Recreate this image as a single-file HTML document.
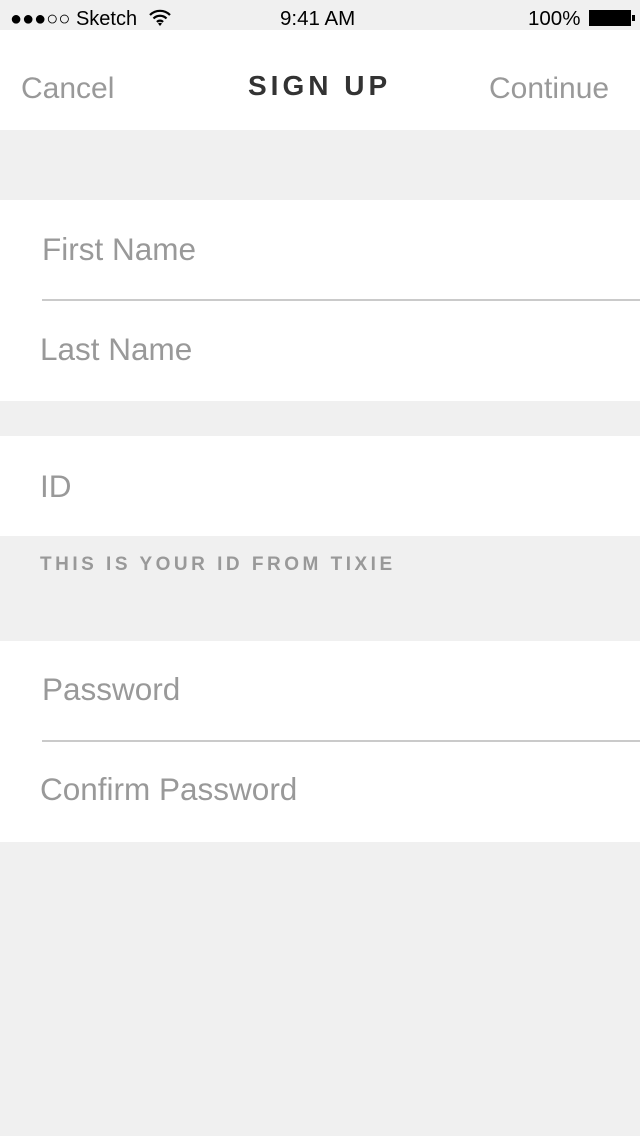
<!DOCTYPE html>
<html><head><style>
body{margin:0;width:640px;height:1136px;background:#f0f0f0;font-family:"Liberation Sans",sans-serif;position:relative;overflow:hidden}
.a{position:absolute}
.w{position:absolute;left:0;width:640px;background:#fff}
.t{position:absolute;color:#999;font-size:31.5px;line-height:1}
.l{position:absolute;left:42px;right:0;height:2px;background:#cacaca}
</style></head><body>
<div class="a" style="left:10px;top:9px;font-size:20px;line-height:1;color:#000">●●●○○ Sketch</div>
<svg class="a" style="left:148px;top:9px" width="24" height="18" viewBox="0 0 24 18"><path d="M2 6a14 14 0 0 1 20 0M5.5 9.5a9 9 0 0 1 13 0M9 13a4 4 0 0 1 6 0" stroke="#000" stroke-width="2.2" fill="none"/><path d="M12 17l-2-2.5a3 3 0 0 1 4 0z" fill="#000"/></svg>
<div class="a" style="left:280px;top:9px;font-size:20.5px;line-height:1;color:#000">9:41 AM</div>
<div class="a" style="left:528px;top:9px;font-size:20.5px;line-height:1;color:#000">100%</div>
<div class="a" style="left:589px;top:10px;width:42px;height:16px;background:#000"></div>
<div class="a" style="left:632px;top:15px;width:3px;height:6px;background:#000"></div>
<div class="w" style="top:30px;height:100px"></div>
<div class="t" style="left:21px;top:74px;font-size:30px">Cancel</div>
<div class="a" style="left:248px;top:72px;font-size:28px;font-weight:bold;letter-spacing:4px;color:#333;line-height:1">SIGN UP</div>
<div class="t" style="left:489px;top:74px;font-size:30px">Continue</div>
<div class="w" style="top:200px;height:201px"></div>
<div class="t" style="left:42px;top:234px">First Name</div>
<div class="l" style="top:299px"></div>
<div class="t" style="left:40px;top:334px">Last Name</div>
<div class="w" style="top:436px;height:100px"></div>
<div class="t" style="left:40px;top:471px">ID</div>
<div class="a" style="left:40px;top:555px;font-size:19px;font-weight:bold;letter-spacing:3.5px;color:#999;line-height:1">THIS IS YOUR ID FROM TIXIE</div>
<div class="w" style="top:641px;height:201px"></div>
<div class="t" style="left:42px;top:674px">Password</div>
<div class="l" style="top:740px"></div>
<div class="t" style="left:40px;top:774px">Confirm Password</div>
</body></html>
